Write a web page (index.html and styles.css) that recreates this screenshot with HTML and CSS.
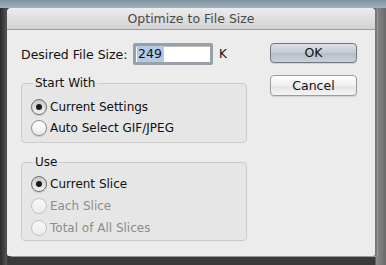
FILE: index.html
```html
<!DOCTYPE html>
<html>
<head>
<meta charset="utf-8">
<link rel="stylesheet" href="styles.css">
</head>
<body>
<div class="dialog">
  <div class="titlebar">Optimize to File Size</div>
  <div class="content">
    <div class="left">
      <div class="size-row">
        <span class="label">Desired File Size:</span>
        <span class="input"><span class="sel">249</span></span>
        <span class="unit">K</span>
      </div>
      <fieldset class="group group-start">
        <legend>Start With</legend>
        <div class="row"><span class="radio checked"></span><span>Current Settings</span></div>
        <div class="row"><span class="radio"></span><span>Auto Select GIF/JPEG</span></div>
      </fieldset>
      <fieldset class="group group-use">
        <legend>Use</legend>
        <div class="row"><span class="radio checked"></span><span>Current Slice</span></div>
        <div class="row disabled"><span class="radio"></span><span>Each Slice</span></div>
        <div class="row disabled"><span class="radio"></span><span>Total of All Slices</span></div>
      </fieldset>
    </div>
    <div class="right">
      <div class="btn btn-default">OK</div>
      <div class="btn">Cancel</div>
    </div>
  </div>
</div>
</body>
</html>
```

FILE: styles.css
```css
* { box-sizing: border-box; }
html, body { margin: 0; }
body {
  width: 386px;
  height: 265px;
  overflow: hidden;
  padding: 8px 11px 9px 7px;
  font-family: "DejaVu Sans", sans-serif;
  font-size: 12px;
  color: #111;
  background:
    linear-gradient(to bottom, #7d93a0 0, #9fb3bd 8px, transparent 8px),
    linear-gradient(to right, #2a2a2a 0, #555 7px, #3a3a3a 7px, #3a3a3a 375px, #8a8a8a 376px, #6a6a6a 386px);
}
.dialog {
  width: 368px;
  height: 248px;
  background: #ececec;
  border-radius: 4px 4px 2px 2px;
  box-shadow: 2px 0 0 #777, 3px 1px 0 #999;
  display: flex;
  flex-direction: column;
  overflow: hidden;
}
.titlebar {
  height: 22px;
  flex: none;
  background: linear-gradient(to bottom, #ececec, #d2d2d2);
  border-bottom: 1px solid #9c9c9c;
  text-align: center;
  line-height: 22px;
  font-size: 12.5px;
  color: #4a4a4a;
  border-radius: 4px 4px 0 0;
}
.content {
  display: flex;
  padding: 13px 0 0 14px;
}
.left { width: 226px; }
.size-row {
  display: flex;
  align-items: center;
  height: 22px;
  white-space: nowrap;
}
.label { width: 112px; font-size: 12.5px; }
.input {
  width: 80px;
  height: 22px;
  border: 3px solid #98a0aa;
  border-radius: 2px;
  background: #fff;
  padding: 1px 1px;
  display: flex;
  align-items: center;
  box-shadow: inset 0 1px 0 #bbb;
}
.sel {
  background: #b4cbe6;
  padding: 1px 2px 1px 1px;
  line-height: 14px;
  font-size: 12.5px;
}
.unit { margin-left: 6px; }
.group {
  margin: 11px 0 0 0;
  border: 1px solid #cbcbcb;
  border-radius: 4px;
  background: #e6e6e6;
  padding: 5px 0 4px 9px;
  min-width: 0;
}
.group legend {
  padding: 0 2px;
  margin-left: 2px;
  line-height: 15px;
}
.group-use {
  margin-top: 12px;
  padding-top: 3px;
  padding-bottom: 1px;
}
.row {
  display: flex;
  align-items: center;
  height: 21px;
  gap: 3px;
}
.group-use .row { height: 22px; }
.row.disabled { color: #8c8c8c; }
.radio {
  width: 16px;
  height: 16px;
  border-radius: 50%;
  border: 1px solid #8e8e8e;
  background: linear-gradient(to bottom, #ffffff, #e9e9e9);
  box-shadow: 0 1px 1px rgba(0,0,0,0.15);
  display: flex;
  align-items: center;
  justify-content: center;
  flex: none;
}
.radio.checked {
  border-color: #6f6f6f;
  background: linear-gradient(to bottom, #c8c8c8, #f2f2f2);
}
.radio.checked::after {
  content: "";
  width: 6px;
  height: 6px;
  border-radius: 50%;
  background: #1a1a1a;
}
.disabled .radio {
  border-color: #c2c2c2;
  background: linear-gradient(to bottom, #f8f8f8, #ececec);
  box-shadow: none;
}
.right {
  margin-left: 23px;
  width: 87px;
  display: flex;
  flex-direction: column;
  gap: 12px;
}
.btn {
  height: 21px;
  border: 1px solid #9b9b9b;
  border-radius: 4px;
  background: linear-gradient(to bottom, #ffffff, #f0f0f0 50%, #e4e4e4 51%, #f4f4f4);
  text-align: center;
  line-height: 19px;
  font-size: 12.5px;
  color: #111;
  box-shadow: 0 1px 1px rgba(0,0,0,0.12);
}
.btn-default {
  height: 20px;
  border-color: #6f7782;
  background: linear-gradient(to bottom, #dde1e6, #c5cad1 50%, #b7bdc6 51%, #ccd1d8);
  line-height: 18px;
}
```
